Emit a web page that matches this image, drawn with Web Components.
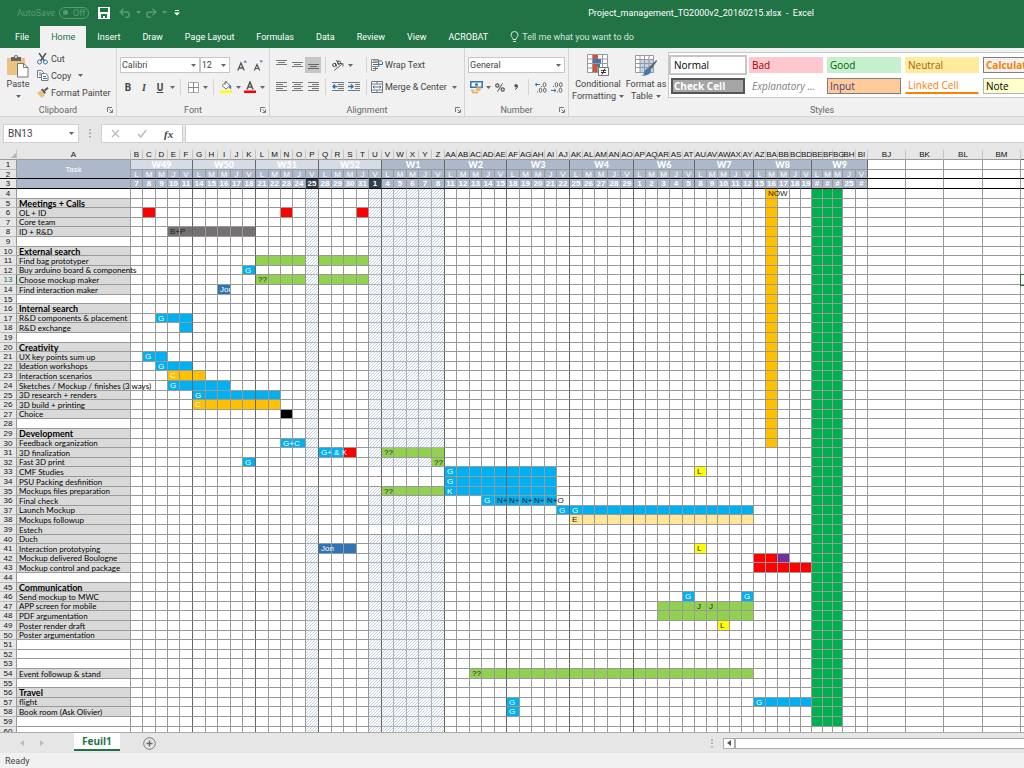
<!DOCTYPE html>
<html lang="en">
<head>
<meta charset="utf-8">
<title>Project_management_TG2000v2_20160215.xlsx - Excel</title>
<style>
  html, body { height: 100%; margin: 0; }
  body {
    overflow: hidden;
    font-family: Roboto, "Open Sans", sans-serif;
    font-size: 9px;
    color: #444;
    background: #e6e6e6;
  }
</style>
</head>
<body>
<xl-app></xl-app>

<script>
// ---------- Icons ----------

const ICONS = {
  save: [12, 12, `<path fill="#fff" fill-rule="evenodd" d="M0 0h12v12H0zM2 1v4h8V1zM3 7v4h2V9h2v2h2V7z"/>`],
  undo: [12, 10, `<path d="M1 4h6a3 2.500 0 0 1 0 5.500H6M4.500 .8L1 4l3.500 3.200" fill="none" stroke="#5a9a78" stroke-width="1.500"/>`],
  redo: [12, 10, `<path d="M11 4H5a3 2.500 0 0 0 0 5.500h1M7.500 .8L11 4 7.500 7.200" fill="none" stroke="#5a9a78" stroke-width="1.500"/>`],
  more: [6, 6, `<path d="M1 .5h4" stroke="#fff"/><path d="M0 2.500h6L3 5.500z" fill="#fff"/>`],
  bulb: [9, 12, `<path d="M3 8.500C3 6.500 1 6 1 4a3.500 3.500 0 0 1 7 0c0 2-2 2.500-2 4.500zM3 10.500h3" fill="none" stroke="#d3e5db"/>`],
  arrow: [5, 3, `<path d="M0 0h5L2.500 3z" fill="#666"/>`],
  arrowlight: [5, 3, `<path d="M0 0h5L2.500 3z" fill="#5a9a78"/>`],
  paste: [22, 23, `<path fill="#eac282" d="M0 3h18v17H0z"/><path fill="#666" d="M4 2h3a2 2 0 0 1 4 0h3v4H4z"/><circle cx="9" cy="2" r="1" fill="#f1f1f1"/><path d="M10.500 8.500h6l4.500 4v9.500H10.500z" fill="#fff" stroke="#777"/><path d="M16.500 8.500v4H21" fill="none" stroke="#777"/>`],
  cut: [11, 12, `<path d="M2 0l5.500 8M9 0L3.500 8" stroke="#555" stroke-width="1.500"/><circle cx="2.500" cy="9" r="2" fill="none" stroke="#3f78b5"/><circle cx="8.500" cy="9" r="2" fill="none" stroke="#3f78b5"/>`],
  copy: [12, 11, `<path d="M.5 .5h4l2 2v5h-6z" fill="#fff" stroke="#777"/><path d="M2 3h2M2 5h3" stroke="#3f78b5"/><path d="M4.500 3.500h4l2.500 2V10.500H4.500z" fill="#fff" stroke="#777"/><path d="M6 6.500h3M6 8.500h4" stroke="#3f78b5"/>`],
  painter: [12, 11, `<path d="M0 6l4-3 4 5-3 3z" fill="#eac282"/><path d="M4 2.500l1.500-1 3.500 4-1.500 1.500z" fill="#555"/><path d="M7.500 3.500L11 .8" stroke="#555" stroke-width="2"/>`],
  borders: [11, 11, `<path d="M.5 .5h10v10H.5z" fill="#fff" stroke="#aaa"/><path d="M5.500 0v11M0 5.500h11" stroke="#888"/>`],
  fill: [12, 12, `<path d="M2 4.500L6 1l4 3.500L6 8z" fill="#fff" stroke="#777"/><path d="M5 4V1.500a1 1 0 0 1 2 0" fill="none" stroke="#777"/><path d="M9.500 3.500q2.500 1 1.500 5l-2-2z" fill="#3f78b5"/><path fill="#ff0" d="M0 9.500h12V12H0z"/>`],
  fontcolor: [12, 12, `<path d="M3 8.500L6 1l3 7.500M4 6h4" fill="none" stroke="#555" stroke-width="1.500"/><path fill="red" d="M0 9.500h12V12H0z"/>`],
  grow: [10, 11, `<path d="M.8 10.500L4 3l3.200 7.500M2 8h4" fill="none" stroke="#555" stroke-width="1.300"/><path d="M6.500 2.500h3.500L8.200 .3z" fill="#3f78b5"/>`],
  shrink: [10, 11, `<path d="M1.300 10.500L4 4.500l2.700 6M2.200 8.500h3.600" fill="none" stroke="#555" stroke-width="1.200"/><path d="M6.500 .5h3.500L8.200 2.800z" fill="#3f78b5"/>`],
  top: [11, 10, `<path d="M0 .5h11M2 2.500h7M0 4.500h11" stroke="#777"/>`],
  middle: [11, 10, `<path d="M0 2.500h11M2 4.500h7M0 6.500h11" stroke="#777"/>`],
  bottom: [11, 10, `<path d="M0 4.500h11M2 6.500h7M0 8.500h11" stroke="#666"/>`],
  left: [11, 10, `<path d="M0 .5h11M0 2.500h7M0 4.500h11M0 6.500h7M0 8.500h11" stroke="#777"/>`],
  center: [11, 10, `<path d="M0 .5h11M2 2.500h7M0 4.500h11M2 6.500h7M0 8.500h11" stroke="#777"/>`],
  right: [11, 10, `<path d="M0 .5h11M4 2.500h7M0 4.500h11M4 6.500h7M0 8.500h11" stroke="#777"/>`],
  orient: [12, 12, `<path d="M2 11.500L11 4.500M11 7.500v-3H8" fill="none" stroke="#666"/><circle cx="2.300" cy="6" r="1.600" fill="none" stroke="#444"/><path d="M3.300 4l1.500 3.500M4.500 1l2.500 5" stroke="#444"/><circle cx="7" cy="3.500" r="1.500" fill="none" stroke="#444"/>`],
  outdent: [12, 10, `<path d="M0 .5h12M6 2.500h6M6 4.500h6M6 6.500h6M0 8.500h12" stroke="#777"/><path d="M5.500 4.500h-4M3 2.500l-2 2 2 2" fill="none" stroke="#2e75b6" stroke-width="1.500"/>`],
  indent: [12, 10, `<path d="M0 .5h12M7 2.500h5M7 4.500h5M7 6.500h5M0 8.500h12" stroke="#777"/><path d="M0 4.500h4.500M3 2.500l2 2-2 2" fill="none" stroke="#2e75b6" stroke-width="1.500"/>`],
  wrap: [12, 12, `<path d="M.5 .5h7v3h-7zM.5 3.500h7v4h-7zM.5 7.500h4v4h-4z" fill="#fff" stroke="#888"/><path d="M2 2h9M2 5.500h5M2 9.500h5" stroke="#666"/><path d="M11.500 3v2.500H7M8.500 3.800L6.800 5.500l1.700 1.700" fill="none" stroke="#2e75b6"/>`],
  merge: [12, 12, `<path d="M.5 .5h11v11H.5z" fill="#fff" stroke="#777"/><path d="M0 3h12M0 9h12M6 0v3M6 9v3" stroke="#777"/><path d="M2 6h8M3.500 4.500L2 6l1.500 1.500M8.500 4.500L10 6 8.500 7.500" fill="none" stroke="#2e75b6"/>`],
  money: [13, 13, `<path d="M.8 .8h11.400v5.500H.8z" fill="#fff" stroke="#2e75b6" stroke-width="1.500"/><circle cx="6.500" cy="3.500" r="1.500" fill="#2e75b6"/><path d="M6.500 7h5M5.500 9h5M1 9.500h3M2 11.500h6" stroke="#eaa84a" stroke-width="1.600"/>`],
  percent: [10, 9, `<circle cx="2.300" cy="2.500" r="1.600" fill="none" stroke="#555" stroke-width="1.200"/><circle cx="7.700" cy="6.500" r="1.600" fill="none" stroke="#555" stroke-width="1.200"/><path d="M7.500 .3L2.500 8.700" stroke="#555"/>`],
  comma: [4, 6, `<circle cx="2" cy="1.700" r="1.700" fill="#555"/><path d="M3.600 1.500q.3 3-2.600 4" fill="none" stroke="#555"/>`],
  incdec: [12, 11, `<path d="M0 2.500h5M2 .8L.3 2.500 2 4.200" fill="none" stroke="#2e75b6"/><ellipse cx="9.500" cy="2.700" rx="1.400" ry="2.100" fill="none" stroke="#666"/><ellipse cx="5.500" cy="8.200" rx="1.300" ry="2.100" fill="none" stroke="#666"/><ellipse cx="9.800" cy="8.200" rx="1.300" ry="2.100" fill="none" stroke="#666"/><path d="M6 4.500h1M2 10h1" stroke="#666"/>`],
  decdec: [12, 11, `<path d="M0 8.500h5M3.200 6.800L5 8.500l-1.800 1.700" fill="none" stroke="#2e75b6"/><ellipse cx="5.500" cy="2.700" rx="1.300" ry="2.100" fill="none" stroke="#666"/><ellipse cx="9.800" cy="2.700" rx="1.300" ry="2.100" fill="none" stroke="#666"/><ellipse cx="9.500" cy="8.200" rx="1.400" ry="2.100" fill="none" stroke="#666"/><path d="M2 4.500h1M6 10h1" stroke="#666"/>`],
  conditional: [24, 24, `<path d="M1.500 .5h20v18h-20z" fill="#fff" stroke="#999"/><path d="M1 5h20M1 9.500h20M1 14h20M6.500 0v19M11.500 0v19M16.500 0v19" stroke="#999"/><path fill="#d35230" d="M7 1h5v4H7zM7 10h4v4H7zM7 14h4v4H7z"/><path fill="#3f78b5" d="M7 5h8v4H7zM11 10h3v3h-3z"/><path d="M12.500 13.500h10v8h-10z" fill="#fff" stroke="#777"/><path d="M15 16.500h5M15 18.500h5M19 14.500l-3 6" stroke="#333"/>`],
  astable: [24, 24, `<path d="M1.500 1.500h18v17h-18z" fill="#fff" stroke="#999"/><path fill="#bdd3ee" d="M6 5h13v13H6z"/><path d="M1 5.500h19M1 9.500h19M1 13.500h19M6 1v18M10.500 1v18M15 1v18" stroke="#999"/><path d="M22.500 6q1 1 0 2l-6 8-2.500-2z" fill="#666"/><path d="M14 14l3 2.500q0 5-10 5.500 3-1 3.500-4t3.500-4z" fill="#3f78b5"/>`],
  launcher: [6, 6, `<path d="M.5 5V.5H5M2.500 2.500L5 5M5.500 2.500v3h-3" fill="none" stroke="#777"/>`],
  cancel: [9, 9, `<path d="M1 1l7 7M8 1L1 8" stroke="#bbb" stroke-width="1.400"/>`],
  check: [10, 9, `<path d="M.8 5l3 3L9.300 1" fill="none" stroke="#bbb" stroke-width="1.500"/>`],
  prev: [4, 6, `<path d="M4 0v6L0 3z" fill="#bbb"/>`],
  next: [4, 6, `<path d="M0 0v6l4-3z" fill="#bbb"/>`],
  add: [13, 13, `<circle cx="6.500" cy="6.500" r="5.800" fill="none" stroke="#777"/><path d="M6.500 3.500v6M3.500 6.500h6" stroke="#666" stroke-width="1.400"/>`],
  scroll: [4, 6, `<path d="M4 0v6L0 3z" fill="#555"/>`],
  grip: [2, 9, `<path d="M0 0h2v1.500H0zM0 3.500h2V5H0zM0 7h2v1.500H0z" fill="#aaa"/>`],
  corner: [5, 5, `<path d="M5 0v5H0z" fill="#b4b4b4"/>`]
};

class XlIcon extends HTMLElement {
  connectedCallback() {
    const [w, h, body] = ICONS[this.getAttribute('name')];
    this.attachShadow({ mode: 'open' }).innerHTML = `
      <style>:host { display: inline-flex; flex: none; } svg { display: block; }</style>
      <svg width="${w}" height="${h}" viewBox="0 0 ${w} ${h}" aria-hidden="true">${body}</svg>`;
  }
}
customElements.define('xl-icon', XlIcon);

// Rules shared by all the parts that hold buttons
const BUTTON_CSS = `
  button { font: inherit; color: inherit; background: none; border: 0; padding: 0; margin: 0; white-space: nowrap; }
  button, .row { display: flex; align-items: center; }
`;

// ---------- Small parts ----------

// An icon-only button; "arrow" gives the narrow drop-down one
class XlTool extends HTMLElement {
  connectedCallback() {
    const icon = this.getAttribute('icon');
    this.attachShadow({ mode: 'open' }).innerHTML = `
      <style>
        ${BUTTON_CSS}
        :host { display: flex; flex: none; width: 16px; height: 16px; }
        :host([icon="arrow"]), :host([icon="arrowlight"]) { width: 8px; }
        :host([pressed]) { background: #c5c5c5; }
        button { flex: 1; justify-content: center; }
      </style>
      <button aria-label="${this.getAttribute('label') || 'More'}">${icon ? `<xl-icon name="${icon}"></xl-icon>` : '<slot></slot>'}</button>`;
  }
}
customElements.define('xl-tool', XlTool);

class XlSeparator extends HTMLElement {
  connectedCallback() {
    this.attachShadow({ mode: 'open' }).innerHTML = `
      <style>:host { display: block; width: 1px; height: 16px; margin: 0 4px; background: #d4d4d4; }</style>`;
  }
}
customElements.define('xl-separator', XlSeparator);

class XlCombo extends HTMLElement {
  connectedCallback() {
    this.attachShadow({ mode: 'open' }).innerHTML = `
      <style>
        :host { display: grid; align-items: center; box-sizing: border-box; height: 16px; background: #fff; border: 1px solid #c6c6c6; }
        select { grid-area: 1 / 1; appearance: none; width: 100%; height: 14px; padding: 0 1px; border: 0; background: none; font: inherit; color: inherit; }
        xl-icon { grid-area: 1 / 1; justify-self: end; margin-right: 3px; pointer-events: none; }
      </style>
      <select aria-label="${this.getAttribute('label')}"><option>${this.getAttribute('value')}</option></select>
      <xl-icon name="arrow"></xl-icon>`;
  }
}
customElements.define('xl-combo', XlCombo);

class XlBigButton extends HTMLElement {
  connectedCallback() {
    this.attachShadow({ mode: 'open' }).innerHTML = `
      <style>
        ${BUTTON_CSS}
        :host { display: block; padding-top: 6px; }
        button { flex-direction: column; width: 100%; line-height: 12px; }
        xl-icon { height: 24px; align-items: center; }
        .row { gap: 3px; min-height: 12px; }
        .row xl-icon { height: 12px; }
      </style>
      <button>
        <xl-icon name="${this.getAttribute('icon')}"></xl-icon>
        <slot></slot>
        <span class="row"><slot name="second"></slot><xl-icon name="arrow"></xl-icon></span>
      </button>`;
  }
}
customElements.define('xl-big-button', XlBigButton);

class XlGroup extends HTMLElement {
  connectedCallback() {
    this.attachShadow({ mode: 'open' }).innerHTML = `
      <style>
        ${BUTTON_CSS}
        :host { display: flex; flex-direction: column; flex: none; box-sizing: border-box; padding: 0 3px; border-right: 1px solid #d4d4d4; height: 68px; }
        .body { flex: 1; min-height: 0; }
        footer { display: grid; grid-template-columns: 1fr auto 1fr; align-items: center; height: 12px; line-height: 12px; color: #666; }
        footer button { grid-column: 3; justify-self: end; }
        footer span { grid-column: 2; }
      </style>
      <div class="body"><slot></slot></div>
      <footer>
        <span>${this.getAttribute('label')}</span>
        ${this.hasAttribute('plain') ? '' : '<button aria-label="Settings"><xl-icon name="launcher"></xl-icon></button>'}
      </footer>`;
  }
}
customElements.define('xl-group', XlGroup);

// ---------- Title bar and tabs ----------

class XlTitleBar extends HTMLElement {
  connectedCallback() {
    this.attachShadow({ mode: 'open' }).innerHTML = `
      <style>
        ${BUTTON_CSS}
        :host { display: flex; align-items: center; height: 25px; padding-left: 17px; color: #fff; background: #217346; }
        .auto { width: 79px; gap: 4px; color: #5a9a78; }
        .switch { gap: 5px; border: 1px solid #5a9a78; border-radius: 7px; padding: 0 3px; line-height: 10px; }
        .switch::before { content: ""; width: 5px; height: 5px; border-radius: 50%; background: #5a9a78; }
        .tools { gap: 1px; }
        .tools :first-child { margin-right: 4px; }
        h1 { margin: 0 210px 0 auto; font: inherit; white-space: pre; }
      </style>
      <div class="row auto"><span>AutoSave</span><button class="switch" role="switch" aria-checked="false">Off</button></div>
      <div class="row tools">
        <xl-tool icon="save" label="Save"></xl-tool>
        <xl-tool icon="undo" label="Undo"></xl-tool>
        <xl-tool icon="arrowlight"></xl-tool>
        <xl-tool icon="redo" label="Redo"></xl-tool>
        <xl-tool icon="arrowlight"></xl-tool>
        <xl-tool icon="more" label="Customize"></xl-tool>
      </div>
      <h1>Project_management_TG2000v2_20160215.xlsx  -  Excel</h1>`;
  }
}
customElements.define('xl-title-bar', XlTitleBar);

class XlTabs extends HTMLElement {
  connectedCallback() {
    const tabs = ['File', 'Home', 'Insert', 'Draw', 'Page Layout', 'Formulas', 'Data', 'Review', 'View', 'ACROBAT'];
    this.attachShadow({ mode: 'open' }).innerHTML = `
      <style>
        ${BUTTON_CSS}
        :host { display: flex; height: 22px; padding: 1px 0 0 4px; color: #fff; background: #217346; }
        button { padding: 0 11px; }
        button:first-child { padding-right: 16px; }
        [aria-selected="true"] { background: #f1f1f1; color: #217346; }
        .tell { gap: 3px; color: #d3e5db; }
      </style>
      ${tabs.map(t => `<button role="tab" aria-selected="${t === 'Home'}">${t}</button>`).join('')}
      <button class="tell"><xl-icon name="bulb"></xl-icon>Tell me what you want to do</button>`;
  }
}
customElements.define('xl-tabs', XlTabs);

// ---------- Ribbon ----------

class XlGallery extends HTMLElement {
  connectedCallback() {
    this.attachShadow({ mode: 'open' }).innerHTML = `
      <style>
        :host { display: grid; grid: 16px 16px / auto-flow 74px; gap: 5px 4px; align-content: center; box-sizing: border-box; padding: 0 2px; overflow: hidden; background: #fff; border: 1px solid #c6c6c6; border-right: 0; }
        button { box-sizing: border-box; padding: 0 2px; border: 1px solid transparent; background: none; text-align: left; font: 10px/12px "Open Sans", sans-serif; white-space: nowrap; overflow: hidden; }
        .normal { color: #000; border-color: #fff; outline: 2px solid #c6c6c6; }
        .check { color: #fff; background: #a5a5a5; border: 2px solid #555; font-weight: 700; padding: 0 1px; line-height: 10px; }
        .bad { color: #9c0006; background: #ffc7ce; }
        .explain { color: #7f7f7f; font-style: italic; }
        .good { color: #006100; background: #c6efce; }
        .input { color: #3f3f76; background: #ffcc99; border-color: #7f7f7f; }
        .neutral { color: #9c6500; background: #ffeb9c; }
        .linked { color: #fa7d00; border-bottom: 2px solid #ff8001; line-height: 11px; }
        .calc { color: #fa7d00; background: #f2f2f2; border-color: #7f7f7f; font-weight: 700; }
        .note { color: #000; background: #ffffcc; border-color: #b2b2b2; }
      </style>
      <button class="normal">Normal</button>
      <button class="check">Check Cell</button>
      <button class="bad">Bad</button>
      <button class="explain">Explanatory ...</button>
      <button class="good">Good</button>
      <button class="input">Input</button>
      <button class="neutral">Neutral</button>
      <button class="linked">Linked Cell</button>
      <button class="calc">Calculation</button>
      <button class="note">Note</button>`;
  }
}
customElements.define('xl-gallery', XlGallery);

class XlRibbon extends HTMLElement {
  connectedCallback() {
    this.attachShadow({ mode: 'open' }).innerHTML = `
      <style>
        ${BUTTON_CSS}
        :host { display: flex; overflow: hidden; background: #f1f1f1; border-bottom: 1px solid #d4d4d4; }
        .cols { display: flex; }
        .rows { display: flex; flex-direction: column; gap: 6px; padding-top: 9px; }
        .list { padding: 2px 0 0 4px; }
        .list button { height: 17px; gap: 2px; }
        .list xl-icon:first-child { width: 12px; }
        .list xl-icon:last-child:not(:first-child) { margin-left: 5px; }
        .wide button { gap: 2px; height: 16px; }
        .clip { width: 117px; }
        .paste { width: 30px; }
        .font { width: 153px; }
        .align { width: 195px; }
        .number { width: 104px; }
        .styles { width: 506px; border: 0; }
        .conditional { width: 52px; }
        .table { width: 44px; }
        .name { width: 82px; }
        .size { width: 31px; }
        .size + xl-tool { margin-left: 4px; }
        b, i, u { font-size: 10px; font-weight: 700; color: #444; }
        i { font-family: "Liberation Serif", serif; }
        .gallery { flex: 1; min-width: 0; height: 46px; margin-top: 4px; }
      </style>
      <xl-group class="clip" label="Clipboard">
        <div class="cols">
          <xl-big-button class="paste" icon="paste">Paste</xl-big-button>
          <div class="list">
            <button><xl-icon name="cut"></xl-icon>Cut</button>
            <button><xl-icon name="copy"></xl-icon>Copy<xl-icon name="arrow"></xl-icon></button>
            <button><xl-icon name="painter"></xl-icon>Format Painter</button>
          </div>
        </div>
      </xl-group>
      <xl-group class="font" label="Font">
        <div class="rows">
          <div class="row">
            <xl-combo class="name" label="Font name" value="Calibri"></xl-combo>
            <xl-combo class="size" label="Font size" value="12"></xl-combo>
            <xl-tool icon="grow" label="Increase font size"></xl-tool>
            <xl-tool icon="shrink" label="Decrease font size"></xl-tool>
          </div>
          <div class="row">
            <xl-tool label="Bold"><b>B</b></xl-tool>
            <xl-tool label="Italic"><i>I</i></xl-tool>
            <xl-tool label="Underline"><u>U</u></xl-tool>
            <xl-tool icon="arrow"></xl-tool>
            <xl-separator></xl-separator>
            <xl-tool icon="borders" label="Borders"></xl-tool>
            <xl-tool icon="arrow"></xl-tool>
            <xl-separator></xl-separator>
            <xl-tool icon="fill" label="Fill color"></xl-tool>
            <xl-tool icon="arrow"></xl-tool>
            <xl-tool icon="fontcolor" label="Font color"></xl-tool>
            <xl-tool icon="arrow"></xl-tool>
          </div>
        </div>
      </xl-group>
      <xl-group class="align" label="Alignment">
        <div class="cols">
          <div class="rows">
            <div class="row">
              <xl-tool icon="top" label="Top align"></xl-tool>
              <xl-tool icon="middle" label="Middle align"></xl-tool>
              <xl-tool icon="bottom" label="Bottom align" pressed></xl-tool>
              <xl-separator></xl-separator>
              <xl-tool icon="orient" label="Orientation"></xl-tool>
              <xl-tool icon="arrow"></xl-tool>
            </div>
            <div class="row">
              <xl-tool icon="left" label="Align left"></xl-tool>
              <xl-tool icon="center" label="Center"></xl-tool>
              <xl-tool icon="right" label="Align right"></xl-tool>
              <xl-separator></xl-separator>
              <xl-tool icon="outdent" label="Decrease indent"></xl-tool>
              <xl-tool icon="indent" label="Increase indent"></xl-tool>
            </div>
          </div>
          <div class="rows wide">
            <div class="row"><xl-separator></xl-separator><button><xl-icon name="wrap"></xl-icon>Wrap Text</button></div>
            <div class="row"><xl-separator></xl-separator><button><xl-icon name="merge"></xl-icon>Merge &amp; Center</button><xl-tool icon="arrow" style="margin-left:4px"></xl-tool></div>
          </div>
        </div>
      </xl-group>
      <xl-group class="number" label="Number">
        <div class="rows">
          <xl-combo label="Number format" value="General"></xl-combo>
          <div class="row">
            <xl-tool icon="money" label="Accounting format"></xl-tool>
            <xl-tool icon="arrow"></xl-tool>
            <xl-tool icon="percent" label="Percent"></xl-tool>
            <xl-tool icon="comma" label="Comma"></xl-tool>
            <xl-separator></xl-separator>
            <xl-tool icon="incdec" label="Increase decimal"></xl-tool>
            <xl-tool icon="decdec" label="Decrease decimal"></xl-tool>
          </div>
        </div>
      </xl-group>
      <xl-group class="styles" label="Styles" plain>
        <div class="cols">
          <xl-big-button class="conditional" icon="conditional">Conditional<span slot="second">Formatting</span></xl-big-button>
          <xl-big-button class="table" icon="astable">Format as<span slot="second">Table</span></xl-big-button>
          <xl-gallery class="gallery"></xl-gallery>
        </div>
      </xl-group>`;
  }
}
customElements.define('xl-ribbon', XlRibbon);

// ---------- Formula bar ----------

class XlFormulaBar extends HTMLElement {
  connectedCallback() {
    this.attachShadow({ mode: 'open' }).innerHTML = `
      <style>
        ${BUTTON_CSS}
        :host { display: flex; align-items: center; height: 33px; padding-left: 3px; background: #e6e6e6; }
        .box { display: flex; align-items: center; box-sizing: border-box; height: 19px; background: #fff; border: 1px solid #d0d0d0; }
        .name { width: 76px; padding-right: 4px; }
        input { flex: 1; min-width: 0; box-sizing: border-box; border: 0; background: none; padding: 0 4px; font: inherit; font-size: 10px; color: inherit; }
        .grip { margin: 0 10px; }
        .tools { width: 82px; justify-content: space-around; margin-right: 2px; }
        .line { flex: 1; border-right: 0; }
        i { font: italic 700 11px "Liberation Serif", serif; }
      </style>
      <div class="box name"><input aria-label="Name box" value="BN13"><xl-icon name="arrow"></xl-icon></div>
      <xl-icon class="grip" name="grip"></xl-icon>
      <div class="box tools">
        <xl-tool icon="cancel" label="Cancel"></xl-tool>
        <xl-tool icon="check" label="Enter"></xl-tool>
        <xl-tool label="Insert function"><i>fx</i></xl-tool>
      </div>
      <div class="box line"><input aria-label="Formula"></div>`;
  }
}
customElements.define('xl-formula-bar', XlFormulaBar);

// ---------- Sheet ----------

const WIDTHS = [
  12, 13, 12, 12, 13,  13, 12, 13, 12, 13,  13, 12, 12, 13, 13,  13, 12, 13, 12, 13,
  12, 13, 12, 13, 13,  12, 13, 12, 13, 12,  13, 12, 13, 12, 13,  13, 12, 13, 13, 13,
  12, 12, 12, 13, 12,  12, 11, 12, 12, 12,  12, 12, 12, 11, 11,  11, 10, 10, 13, 12,
  38, 38, 39, 38, 38
];
const WEEKS = ['W49', 'W50', 'W51', 'W52', 'W1', 'W2', 'W3', 'W4', 'W6', 'W7', 'W8', 'W9'];
const DAYS = ('7 8 9 10 11 14 15 16 17 18 21 22 23 24 25 28 29 30 31 1 4 5 6 7 8 11 12 13 14 15 18 19 20 21 22 ' +
  '25 26 27 28 29 1 2 3 4 5 8 9 10 11 12 15 16 17 18 19 # # # 25 #').split(' ');

// Names starting with * are section titles
const TASKS = {
  5: '*Meetings + Calls', 6: 'OL + ID', 7: 'Core team', 8: 'ID + R&D',
  10: '*External search', 11: 'Find bag prototyper', 12: 'Buy arduino board & components', 13: 'Choose mockup maker', 14: 'Find interaction maker',
  16: '*Internal search', 17: 'R&D components & placement', 18: 'R&D exchange',
  20: '*Creativity', 21: 'UX key points sum up', 22: 'Ideation workshops', 23: 'Interaction scenarios', 24: 'Sketches / Mockup / finishes (3 ways)',
  25: '3D research + renders', 26: '3D build + printing', 27: 'Choice',
  29: '*Development', 30: 'Feedback organization', 31: '3D finalization', 32: 'Fast 3D print', 33: 'CMF Studies', 34: 'PSU Packing desfinition',
  35: 'Mockups files preparation', 36: 'Final check', 37: 'Launch Mockup', 38: 'Mockups followup', 39: 'Estech', 40: 'Duch',
  41: 'Interaction prototyping', 42: 'Mockup delivered Boulogne', 43: 'Mockup control and package',
  45: '*Communication', 46: 'Send mockup to MWC', 47: 'APP screen for mobile', 48: 'PDF argumentation', 49: 'Poster render draft', 50: 'Poster argumentation',
  54: 'Event followup & stand', 56: '*Travel', 57: 'flight', 58: 'Book room (Ask Olivier)'
};

// row, first column, last column, colour, text in the first cell
const BARS = [
  [6, 'C', 'C', 'red'], [6, 'N', 'N', 'red'], [6, 'T', 'T', 'red'],
  [8, 'E', 'K', 'gray', 'B+P'],
  [11, 'L', 'O', 'green'], [11, 'Q', 'T', 'green'],
  [12, 'K', 'K', 'blue', 'G'],
  [13, 'L', 'O', 'green', '??'], [13, 'Q', 'T', 'green'],
  [14, 'I', 'I', 'navy clip', 'Jon'],
  [17, 'D', 'F', 'blue', 'G'], [18, 'F', 'F', 'blue'],
  [21, 'C', 'D', 'blue', 'G'], [22, 'D', 'F', 'blue', 'G'],
  [23, 'E', 'G', 'orange', 'C'], [24, 'E', 'I', 'blue', 'G'],
  [25, 'G', 'M', 'blue', 'G'], [26, 'G', 'M', 'orange', 'C'], [27, 'N', 'N', 'black'],
  [30, 'N', 'O', 'blue', 'G+C'],
  [31, 'Q', 'R', 'blue', 'G+ & K'], [31, 'S', 'S', 'red'], [31, 'V', 'Z', 'green', '??'],
  [32, 'K', 'K', 'blue', 'G'], [32, 'Z', 'Z', 'green', '??'],
  [33, 'AA', 'AI', 'blue', 'G'], [33, 'AU', 'AU', 'yellow', 'L'],
  [34, 'AA', 'AI', 'blue', 'G'],
  [35, 'V', 'Z', 'green', '??'], [35, 'AA', 'AI', 'blue', 'K'],
  [36, 'AD', 'AD', 'blue', 'G'], [36, 'AE', 'AE', 'blue dark', 'N+'], [36, 'AF', 'AF', 'blue dark', 'N+'],
  [36, 'AG', 'AG', 'blue dark', 'N+'], [36, 'AH', 'AH', 'blue dark', 'N+'], [36, 'AI', 'AI', 'blue dark', 'N+O'],
  [37, 'AJ', 'AJ', 'blue', 'G'], [37, 'AK', 'AY', 'blue', 'G'],
  [38, 'AK', 'AY', 'cream', 'E'],
  [41, 'Q', 'S', 'navy', 'Jon'], [41, 'AU', 'AU', 'yellow', 'L'],
  [42, 'AZ', 'BA', 'red'], [42, 'BB', 'BB', 'purple'], [43, 'AZ', 'BD', 'red'],
  [46, 'AT', 'AT', 'blue', 'G'], [46, 'AY', 'AY', 'blue', 'G'],
  [47, 'AR', 'AT', 'green'], [47, 'AU', 'AU', 'green', 'J'], [47, 'AV', 'AY', 'green', 'J'],
  [48, 'AR', 'AY', 'green'], [49, 'AW', 'AW', 'yellow', 'L'],
  [54, 'AC', 'AY', 'green', '??'],
  [57, 'AF', 'AF', 'blue', 'G'], [57, 'AZ', 'BD', 'blue', 'G'], [58, 'AF', 'AF', 'blue', 'G']
];

function colName(i) {
  // 0 is column B
  const n = i + 1;
  return n < 26 ? String.fromCharCode(65 + n) : String.fromCharCode(64 + Math.floor(n / 26)) + String.fromCharCode(65 + n % 26);
}
const COLS = WIDTHS.map((w, i) => colName(i));
const esc = s => s.replace(/&/g, '&amp;');

class XlSheet extends HTMLElement {
  connectedCallback() {
    this.cells = {};
    this.fillBackground();
    for (const [row, from, to, color, text] of BARS) {
      for (let c = COLS.indexOf(from); c <= COLS.indexOf(to); c++) {
        this.cells[row + ':' + c] = { color, text: COLS[c] === from ? text : '' };
      }
    }
    this.attachShadow({ mode: 'open' }).innerHTML = `
      <style>
        :host { display: block; min-height: 0; overflow: hidden; font: 8px/8px "Liberation Sans", Arial, sans-serif; color: #222; background: #fff; }
        table { table-layout: fixed; width: 0; border-spacing: 0; }
        th, td { box-sizing: border-box; height: 10px; padding: 1px 0 0; font-weight: 400; line-height: 8px; white-space: nowrap; border: solid #999; border-width: 0 1px 1px 0; }
        tbody tr:nth-child(5n + 2) > *, tbody tr:nth-child(5n) > * { height: 9px; line-height: 7px; }
        thead th { background: #e6e6e6; color: #111; border-right-color: #c4c4c4; }
        thead th:last-child { border-bottom: 1px solid #217346; }
        thead xl-icon { float: right; }
        tbody > tr > th { background: #e6e6e6; color: #111; border-bottom-color: #bbb; }
        tbody > tr.current > th { color: #217346; border-right: 1px solid #217346; }
        td { text-align: left; padding-left: 2px; }
        td.end { border-right-color: #666; }
        td.task { font-family: Lato, sans-serif; color: #000; }
        td.task.on { background: #d9d9d9; }
        td.title { font-weight: 700; font-size: 9px; }
        .head td { background: #adb9ca; color: #fff; text-align: center; padding: 1px 0 0; }
        .head td.week { font: 900 9px/8px Lato, sans-serif; }
        .head td.pale { background: #d6dce5; }
        .head td.day { font-weight: 700; }
        .head td.off { background: #333f4f; }
        .head td.out { background: #fff; }
        .head.line > *, .head td.merged { border-bottom: 1px solid #000; }
        .hatch { background: linear-gradient(135deg, #fff 0 35%, #c8d3e2 35% 65%, #fff 65%) 0 0 / 3px 3px; border-color: #aab2be; }
        .red { background: red; }
        .gray { background: #767171; }
        .green { background: #92d050; }
        .blue { background: #00b0f0; color: #fff; }
        .dark { color: #111; }
        .navy { background: #2e75b6; color: #fff; }
        .orange { background: #ffc000; color: #fff; }
        .now { background: #ffc000; }
        .black { background: #000; }
        .yellow { background: #ff0; }
        .cream { background: #ffe699; }
        .purple { background: #7030a0; }
        .trip { background: #00b050; }
        .clip { overflow: hidden; }
        .selected { outline: 1px solid #217346; }
      </style>
      <table>
        <colgroup><col style="width:17px"><col style="width:114px">${WIDTHS.map(w => `<col style="width:${w}px">`).join('')}</colgroup>
        <thead><tr><th><xl-icon name="corner"></xl-icon></th><th>A</th>${COLS.map(c => `<th>${c === 'BN' ? '' : c}</th>`).join('')}</tr></thead>
        <tbody>${this.headRows()}${this.bodyRows()}</tbody>
      </table>`;
  }

  fillBackground() {
    const holidays = ['P', 'U', 'V', 'W', 'X', 'Y', 'Z'];
    for (let row = 4; row <= 60; row++) {
      if (row !== 33 && row !== 34 && row !== 39) {
        holidays.forEach(h => { this.cells[row + ':' + COLS.indexOf(h)] = { color: 'hatch' }; });
      }
      if (row <= 30) {
        this.cells[row + ':' + COLS.indexOf('BA')] = { color: 'now', text: row === 4 ? 'NOW' : '' };
      }
      if (row < 60) {
        ['BE', 'BF', 'BG'].forEach(c => { this.cells[row + ':' + COLS.indexOf(c)] = { color: 'trip' }; });
      }
    }
  }

  headRows() {
    const out = '<td class="out"></td>'.repeat(5);
    const weeks = WEEKS.map((w, i) => `<td colspan="5" class="week end ${i < 4 ? 'pale' : ''}">${w}</td>`).join('');
    const letters = DAYS.map((d, i) => `<td class="${i % 5 === 4 ? 'end' : ''}">${'LMMJV'[i % 5]}</td>`).join('');
    const days = DAYS.map((d, i) => `<td class="day ${i === 14 || i === 19 ? 'off' : ''} ${i % 5 === 4 ? 'end' : ''}">${d}</td>`).join('');
    return `
      <tr class="head"><th>1</th><td rowspan="2" class="merged">Task</td>${weeks}${out}</tr>
      <tr class="head line"><th>2</th>${letters}${out}</tr>
      <tr class="head line"><th>3</th><td></td>${days}${out}</tr>`;
  }

  bodyRows() {
    let html = '';
    for (let row = 4; row <= 60; row++) {
      const name = TASKS[row] || '';
      const title = name[0] === '*';
      html += `<tr class="${row === 13 ? 'current' : ''}"><th>${row}</th>`;
      html += `<td class="task ${name ? 'on' : ''} ${title ? 'title' : ''}">${esc(title ? name.slice(1) : name)}</td>`;
      COLS.forEach((c, i) => {
        const cell = this.cells[row + ':' + i] || { color: '' };
        const end = i % 5 === 4 && i < 40 ? 'end' : '';
        const selected = row === 13 && c === 'BN' ? 'selected' : '';
        html += `<td class="${cell.color} ${end} ${selected}">${esc(cell.text || '')}</td>`;
      });
      html += '</tr>';
    }
    return html;
  }
}
customElements.define('xl-sheet', XlSheet);

// ---------- Bottom ----------

class XlSheetTabs extends HTMLElement {
  connectedCallback() {
    this.attachShadow({ mode: 'open' }).innerHTML = `
      <style>
        ${BUTTON_CSS}
        :host { display: flex; align-items: center; height: 20px; background: #e6e6e6; border-top: 1px solid #ababab; }
        .nav { gap: 4px; padding: 0 24px 0 14px; }
        .tab { align-self: flex-start; padding: 0 8px; height: 18px; box-sizing: border-box; background: #fff; color: #217346; font: 700 10px "Open Sans", sans-serif; border-bottom: 2px solid #217346; margin-right: 22px; }
        .grip { margin: 0 10px 0 auto; }
        .scroll { display: flex; width: 301px; }
        .scroll > * { box-sizing: border-box; height: 11px; background: #fff; border: 1px solid #ababab; }
        .scroll button { width: 12px; justify-content: center; }
        .thumb { flex: 1; border-right: 0; }
      </style>
      <div class="row nav"><xl-tool icon="prev" label="Previous sheet"></xl-tool><xl-tool icon="next" label="Next sheet"></xl-tool></div>
      <button class="tab" role="tab" aria-selected="true">Feuil1</button>
      <xl-tool icon="add" label="New sheet"></xl-tool>
      <xl-icon class="grip" name="grip"></xl-icon>
      <div class="scroll"><button aria-label="Scroll left"><xl-icon name="scroll"></xl-icon></button><div class="thumb"></div></div>`;
  }
}
customElements.define('xl-sheet-tabs', XlSheetTabs);

class XlStatus extends HTMLElement {
  connectedCallback() {
    this.attachShadow({ mode: 'open' }).innerHTML = `
      <style>:host { display: flex; align-items: center; height: 15px; padding-left: 5px; background: #f1f1f1; }</style>
      <span>Ready</span>`;
  }
}
customElements.define('xl-status', XlStatus);

class XlApp extends HTMLElement {
  connectedCallback() {
    this.attachShadow({ mode: 'open' }).innerHTML = `
      <style>
        :host { display: flex; flex-direction: column; height: 100vh; overflow: hidden; }
        xl-title-bar, xl-tabs, xl-ribbon, xl-formula-bar, xl-sheet-tabs, xl-status { flex: none; }
        xl-sheet { flex: 1; }
      </style>
      <xl-title-bar></xl-title-bar>
      <xl-tabs></xl-tabs>
      <xl-ribbon></xl-ribbon>
      <xl-formula-bar></xl-formula-bar>
      <xl-sheet></xl-sheet>
      <xl-sheet-tabs></xl-sheet-tabs>
      <xl-status></xl-status>`;
  }
}
customElements.define('xl-app', XlApp);
</script>
</body>
</html>
